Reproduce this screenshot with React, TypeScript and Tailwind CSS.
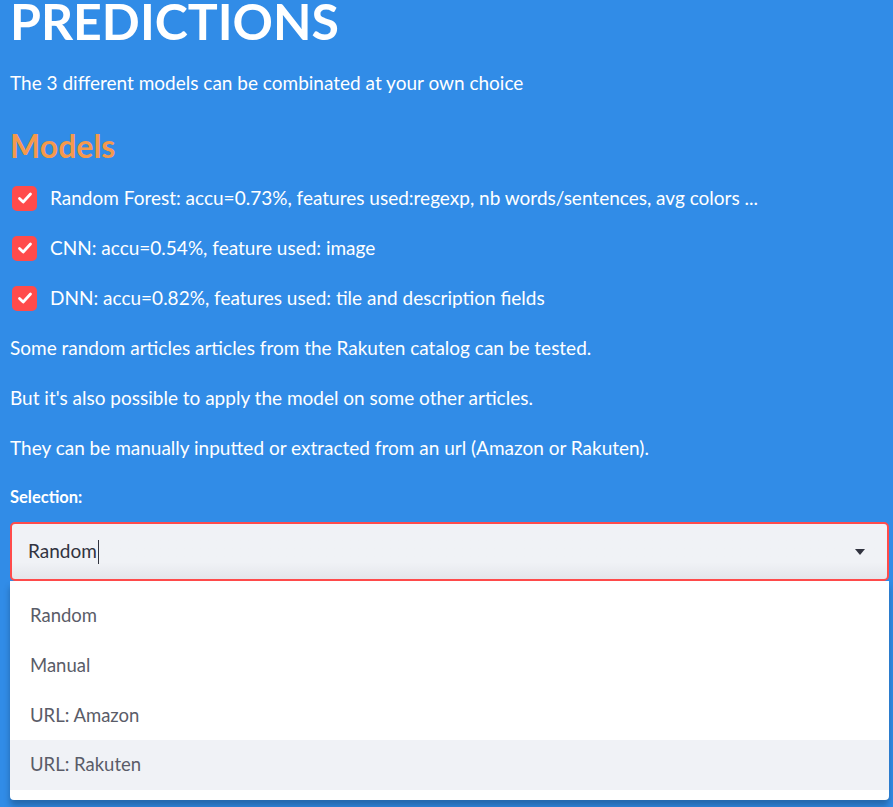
import React from "react";

const font = { fontFamily: "Lato, 'Noto Sans', sans-serif" };

function Check() {
  return (
    <div className="w-[25px] h-[25px] rounded-[5px] bg-[#ff4b4b] flex items-center justify-center shrink-0">
      <svg width="16" height="16" viewBox="0 0 16 16">
        <polyline points="2.5,8.5 6.2,12 13.5,4" fill="none" stroke="white" strokeWidth="2.8" strokeLinecap="round" strokeLinejoin="round" />
      </svg>
    </div>
  );
}

export default function App() {
  const checks = [
    "Random Forest: accu=0.73%, features used:regexp, nb words/sentences, avg colors ...",
    "CNN: accu=0.54%, feature used: image",
    "DNN: accu=0.82%, features used: tile and description fields",
  ];
  const paras = [
    "Some random articles articles from the Rakuten catalog can be tested.",
    "But it's also possible to apply the model on some other articles.",
    "They can be manually inputted or extracted from an url (Amazon or Rakuten).",
  ];
  const options = ["Random", "Manual", "URL: Amazon", "URL: Rakuten"];
  return (
    <div className="w-[893px] h-[807px] overflow-hidden bg-[#318ce7] text-white" style={font}>
      <div className="pl-[10px] pr-[4px] flex flex-col">
        <div className="h-[43px] flex items-end">
          <h1 className="text-[50px] font-bold leading-[43px]">PREDICTIONS</h1>
        </div>
        <div className="mt-[21px] h-[38px] flex items-center text-[19px]">
          The 3 different models can be combinated at your own choice
        </div>
        <div className="mt-[25px] h-[38px] flex items-center text-[32px] font-bold text-[#f5994c]">
          Models
        </div>
        <div className="mt-[8px] flex flex-col">
          {checks.map((c) => (
            <div key={c} className="h-[50px] flex items-center gap-[13px] pl-[2px] text-[19px]">
              <Check />
              <span>{c}</span>
            </div>
          ))}
        </div>
        <div className="flex flex-col">
          {paras.map((p) => (
            <div key={p} className="h-[50px] flex items-center text-[19px]">
              {p}
            </div>
          ))}
        </div>
        <div className="mt-[11px] h-[26px] flex items-center text-[16.5px] font-bold">Selection:</div>
        <div className="mt-[12px] h-[59px] rounded-[5px] border-2 border-[#ff4b4b] bg-gradient-to-b from-[#f0f2f6] from-70% to-[#e4e6eb] flex items-center pl-[16px] pr-[22px] text-[#31333f] text-[19px]">
          <span>Random</span>
          <span className="ml-[1px] w-[1.5px] h-[24px] bg-[#31333f]" />
          <div className="flex-1" />
          <svg width="10" height="6" viewBox="0 0 10 6">
            <polygon points="0,0 10,0 5,6" fill="#31333f" />
          </svg>
        </div>
        <div className="h-[219px] bg-white rounded-b-[4px] shadow-[0_6px_6px_rgba(0,0,0,0.25)] py-[10px] flex flex-col text-[18.5px] text-[#5a5c68]">
          {options.map((o, i) => (
            <div key={o} className={`h-[50px] flex items-center pl-[20px] ${i === 3 ? "bg-[#f0f2f6]" : ""}`}>
              {o}
            </div>
          ))}
        </div>
      </div>
    </div>
  );
}
